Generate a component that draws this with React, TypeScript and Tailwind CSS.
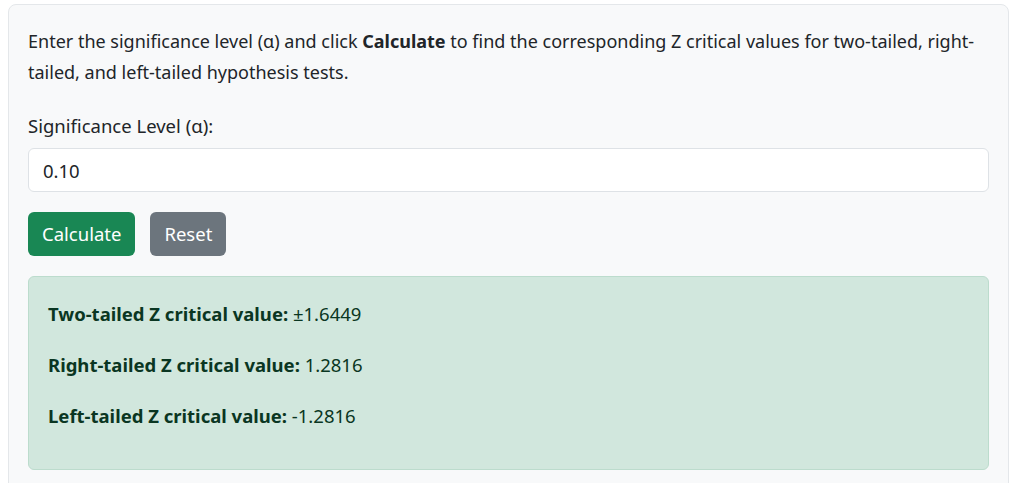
import { useState } from 'react'

const font = { fontFamily: '"Noto Sans", "Open Sans", sans-serif' }

export default function App() {
  const [alpha, setAlpha] = useState('0.10')

  return (
    <div className="min-h-screen bg-white pl-2 pt-1" style={font}>
      <div className="w-[1001px] rounded-lg border border-[#e4e7ea] bg-[#f8f9fa] px-[19px] pt-[21px] pb-6 text-[18.5px] text-[#212529]">
        <p className="mb-[22px] text-[18px] leading-[31px]">
          Enter the significance level (α) and click <strong>Calculate</strong> to find the corresponding Z critical
          values for two-tailed, right-tailed, and left-tailed hypothesis tests.
        </p>

        <label className="mb-[7px] block leading-[31px]">Significance Level (α):</label>
        <input
          value={alpha}
          onChange={e => setAlpha(e.target.value)}
          className="block h-11 w-full rounded-md border border-[#dee2e6] bg-white px-[14px] text-[18.5px] text-[#212529] outline-none"
        />

        <div className="mt-5 flex gap-[15px]">
          <button className="h-11 rounded-md bg-[#198754] px-[14px] text-[18.5px] text-white">Calculate</button>
          <button className="h-11 rounded-md bg-[#6c757d] px-[14px] text-[18.5px] text-white">Reset</button>
        </div>

        {/* Results */}
        <div className="mt-5 rounded-md border border-[#bcdccd] bg-[#d1e7dd] px-[19px] pt-[21px] pb-[18px] text-[#0a3622]">
          <p className="mb-5 leading-[31px]">
            <strong>Two-tailed Z critical value:</strong> ±1.6449
          </p>
          <p className="mb-5 leading-[31px]">
            <strong>Right-tailed Z critical value:</strong> 1.2816
          </p>
          <p className="mb-5 leading-[31px]">
            <strong>Left-tailed Z critical value:</strong> -1.2816
          </p>
        </div>
      </div>
    </div>
  )
}
